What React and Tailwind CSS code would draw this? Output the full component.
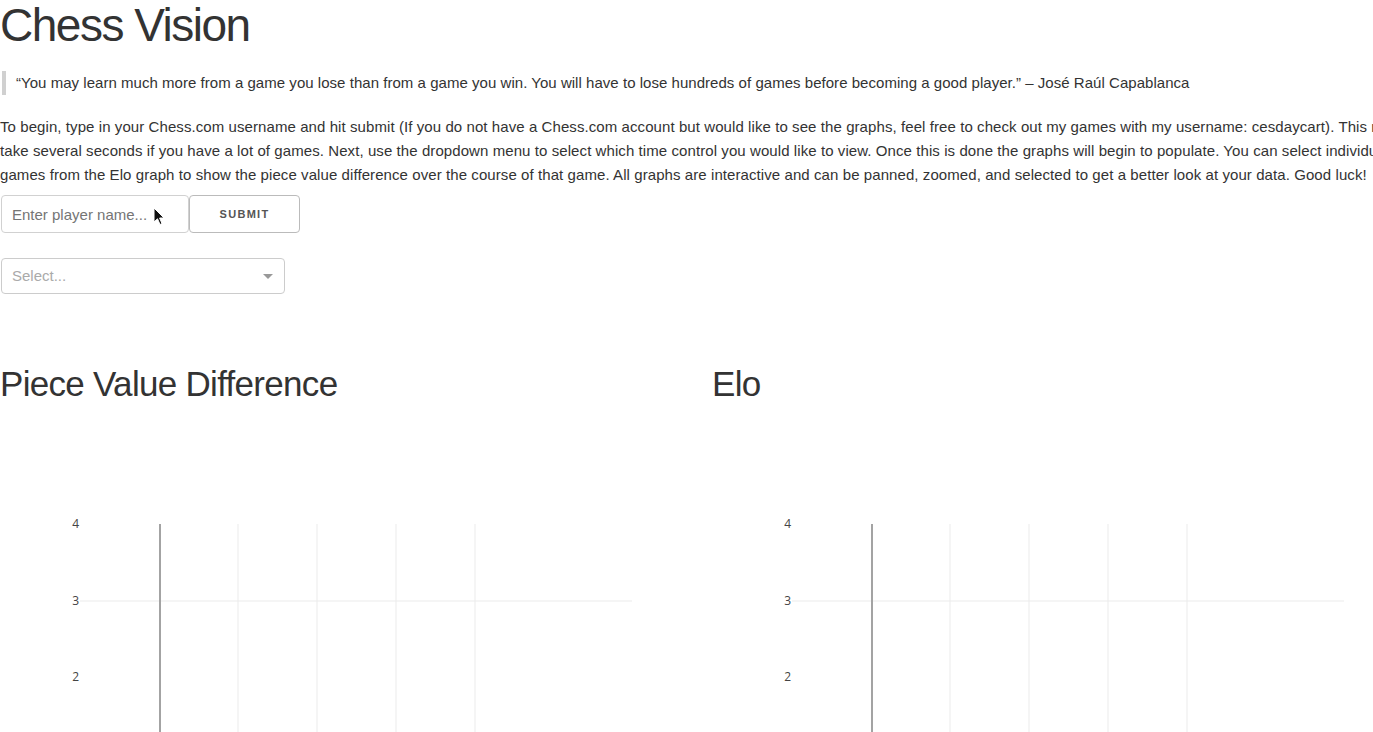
import { useState } from "react";

const FONT = { fontFamily: '"Liberation Sans", Arial, sans-serif' };

/* plotly style empty chart */
function EmptyChart() {
  const grid = [238, 317, 396, 475];
  return (
    <svg width="659" height="450" className="block">
      {grid.map((x) => (
        <line key={x} x1={x} y1="100" x2={x} y2="450" stroke="#ebebeb" strokeWidth="1" />
      ))}
      <line x1="80" y1="177" x2="632" y2="177" stroke="#ebebeb" strokeWidth="1" />
      <line x1="160" y1="100" x2="160" y2="450" stroke="#a3a3a3" strokeWidth="2" />
      {[
        ["4", 100],
        ["3", 177],
        ["2", 253],
      ].map(([t, y]) => (
        <text
          key={t}
          x="79"
          y={y + 4}
          textAnchor="end"
          fontSize="12"
          fill="#444"
          style={{ fontFamily: '"Open Sans", sans-serif' }}
        >
          {t}
        </text>
      ))}
    </svg>
  );
}

export default function App() {
  const [name, setname] = useState("");

  return (
    <div className="h-[732px] w-full overflow-hidden bg-white text-[#333] relative" style={FONT}>
      <h1 className="m-0 text-[46px] leading-[50px] tracking-[-1.5px] font-normal">Chess Vision</h1>

      {/* quote */}
      <blockquote className="mt-[21px] ml-[2px] border-l-4 border-[#d0d0d0] pl-[10px] text-[15px] leading-[24px] tracking-[0.035px] whitespace-nowrap">
        “You may learn much more from a game you lose than from a game you win. You will have to lose hundreds of games before becoming a good player.” – José Raúl Capablanca
      </blockquote>

      {/* intro */}
      <p className="mt-[20px] text-[15px] leading-[24px] tracking-[0.08px] whitespace-nowrap">
        <span className="block">
          To begin, type in your Chess.com username and hit submit (If you do not have a Chess.com account but would like to see the graphs, feel free to check out my games with my username: cesdaycart). This may
        </span>
        <span className="block">
          take several seconds if you have a lot of games. Next, use the dropdown menu to select which time control you would like to view. Once this is done the graphs will begin to populate. You can select individual
        </span>
        <span className="block">
          games from the Elo graph to show the piece value difference over the course of that game. All graphs are interactive and can be panned, zoomed, and selected to get a better look at your data. Good luck!
        </span>
      </p>

      {/* username form */}
      <div className="mt-[8px] flex">
        <input
          value={name}
          onChange={(e) => setname(e.target.value)}
          placeholder="Enter player name..."
          className="ml-[1px] h-[38px] w-[188px] rounded-[4px] border border-[#d1d1d1] px-[10px] text-[15px] outline-none placeholder:text-[#757575]"
          style={FONT}
        />
        <button className="h-[38px] w-[111px] rounded-[4px] border border-[#bbb] text-[11px] font-bold tracking-[1.3px] text-[#555] uppercase">
          Submit
        </button>
      </div>

      {/* dropdown */}
      <div className="mt-[25px] ml-[1px] flex h-[36px] w-[284px] items-center justify-between rounded-[4px] border border-[#ccc] pl-[10px] pr-[11px]">
        <span className="text-[15px] text-[#aaa]">Select...</span>
        <span className="h-0 w-0 border-x-[5px] border-t-[5px] border-x-transparent border-t-[#999]"></span>
      </div>

      {/* graphs */}
      <div className="mt-[68px] flex">
        <div className="w-[659px] shrink-0">
          <h2 className="m-0 text-[35px] leading-[44px] tracking-[-0.7px] font-normal">Piece Value Difference</h2>
          <div className="mt-[18px]">
            <EmptyChart />
          </div>
        </div>
        <div className="ml-[53px] w-[659px] shrink-0">
          <h2 className="m-0 text-[35px] leading-[44px] tracking-[-0.7px] font-normal">Elo</h2>
          <div className="mt-[18px]">
            <EmptyChart />
          </div>
        </div>
      </div>

      {/* mouse pointer */}
      <svg className="absolute left-[153px] top-[207px]" width="12" height="19" viewBox="0 0 12 19">
        <path d="M1 1 L1 15 L4.5 11.8 L7 17.5 L9 16.6 L6.6 11 L11 11 Z" fill="#111" stroke="#fff" strokeWidth="1" />
      </svg>
    </div>
  );
}
